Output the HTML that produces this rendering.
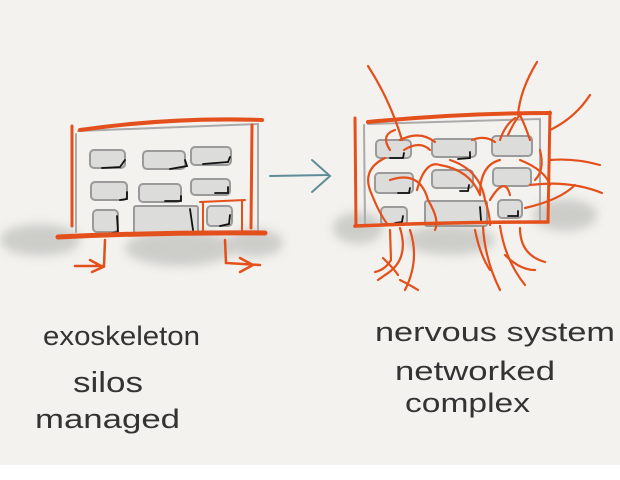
<!DOCTYPE html>
<html><head><meta charset="utf-8"><style>
html,body{margin:0;padding:0;background:#fff}
svg{display:block}
text{font-family:"Liberation Sans",sans-serif;fill:#333;font-weight:normal}
</style></head><body>
<svg width="620" height="480" viewBox="0 0 620 480" xmlns="http://www.w3.org/2000/svg">
<defs>
<filter id="bl" x="-30%" y="-50%" width="160%" height="200%"><feGaussianBlur stdDeviation="5"/></filter>
</defs>
<rect width="620" height="465" fill="#f3f2ee"/>
<g fill="#c9c9c6" filter="url(#bl)" opacity="0.9">
<ellipse cx="40" cy="240" rx="40" ry="16"/>
<ellipse cx="180" cy="248" rx="55" ry="18"/>
<ellipse cx="255" cy="243" rx="28" ry="14"/>
<ellipse cx="358" cy="228" rx="25" ry="16"/>
<ellipse cx="450" cy="240" rx="45" ry="15"/>
<ellipse cx="565" cy="215" rx="32" ry="16"/>
</g>
<g fill="none" stroke-linecap="round">
<path d="M78 131 L258 124 L258 230 M76 134 L76 232" stroke="#aaa" stroke-width="2"/>
<g fill="#dcdcda" stroke="#9a9a9a" stroke-width="2">
<rect x="90" y="150" width="35" height="18" rx="4"/>
<rect x="143" y="151" width="42" height="18" rx="4"/>
<rect x="191" y="147" width="40" height="18" rx="4"/>
<rect x="91" y="182" width="36" height="18" rx="4"/>
<rect x="139" y="184" width="42" height="18" rx="4"/>
<rect x="191" y="179" width="39" height="16" rx="4"/>
<rect x="93" y="210" width="25" height="22" rx="4"/>
<rect x="134" y="206" width="64" height="27" rx="2"/>
<rect x="207" y="206" width="25" height="20" rx="4"/>
</g>
<g stroke="#111" stroke-width="1.8">
<path d="M102 168 L120 167 L125 160"/><path d="M170 169 L187 166 L185 160"/>
<path d="M203 164 L228 162 L230 157"/><path d="M120 200 L127 199 L127 192"/>
<path d="M165 201 L181 201 L181 196"/><path d="M215 193 L228 193 L228 187"/>
<path d="M112 233 L118 232 L117 216"/><path d="M190 209 L193 230"/>
<path d="M220 226 L229 224 L230 215"/>
</g>
<g stroke="#e4501c">
<path d="M80 130 Q170 117 262 120" stroke-width="4"/>
<path d="M72 126 L72 226" stroke-width="3"/>
<path d="M252 125 L251 228" stroke-width="3"/>
<path d="M200 202 L245 200 M203 203 L203 233 M242 201 L242 230" stroke-width="2"/>
<path d="M58 237 Q160 232 265 233" stroke-width="5"/>
<path d="M105 240 L104 266 L75 266 M90 260 L103 267 L92 272" stroke-width="2.5"/>
<path d="M225 240 L226 263 L260 265 M240 258 L253 265 L240 272" stroke-width="2.5"/>
</g>
<path d="M270 176 L328 175 M312 160 L330 176 L312 192" stroke="#5f8c96" stroke-width="2"/>
<path d="M368 124 L540 119 L540 222 M364 125 L365 226" stroke="#aaa" stroke-width="2"/>
<g fill="#dcdcda" stroke="#9a9a9a" stroke-width="2">
<rect x="376" y="140" width="35" height="18" rx="4"/>
<rect x="432" y="139" width="44" height="18" rx="4"/>
<rect x="492" y="136" width="40" height="20" rx="4"/>
<rect x="375" y="173" width="38" height="20" rx="4"/>
<rect x="432" y="170" width="41" height="18" rx="4"/>
<rect x="493" y="168" width="38" height="18" rx="4"/>
<rect x="381" y="207" width="26" height="18" rx="4"/>
<rect x="425" y="201" width="62" height="25" rx="2"/>
<rect x="498" y="200" width="24" height="18" rx="4"/>
</g>
<g stroke="#111" stroke-width="1.8">
<path d="M390 158 L403 158 L404 153"/><path d="M458 159 L470 158 L470 152"/>
<path d="M398 193 L409 193 L410 188"/><path d="M460 191 L468 191 L469 185"/>
<path d="M395 223 L402 222 L403 216"/><path d="M480 207 L481 220"/>
<path d="M508 216 L518 216 L518 211"/>
</g>
<g stroke="#e4501c" stroke-width="2.2">
<path d="M368 122 Q460 113 550 113" stroke-width="4"/>
<path d="M355 118 L356 226" stroke-width="3"/>
<path d="M550 112 L548 222" stroke-width="3"/>
<path d="M355 226 Q450 222 548 222" stroke-width="3.5"/>
<path d="M368 66 Q390 100 402 140"/>
<path d="M537 62 Q520 90 518 115"/>
<path d="M590 95 Q575 118 550 130"/>
<path d="M395 130 Q380 135 390 150"/>
<path d="M400 140 Q420 130 435 142"/>
<path d="M404 150 Q420 140 430 150"/>
<path d="M472 140 Q485 135 495 142"/>
<path d="M508 135 Q515 120 520 115 Q525 125 530 140"/>
<path d="M500 140 Q505 125 515 118"/>
<path d="M385 158 Q360 170 372 195 Q380 215 388 225"/>
<path d="M390 180 Q420 170 428 200 Q440 220 435 230"/>
<path d="M417 190 Q425 160 440 165 Q470 170 480 195"/>
<path d="M450 160 Q480 170 485 200 Q490 215 490 225"/>
<path d="M480 195 Q480 165 500 160"/>
<path d="M490 200 Q505 175 510 195"/>
<path d="M550 160 Q575 158 600 165"/>
<path d="M530 185 Q570 180 602 193"/>
<path d="M525 208 Q560 200 575 185"/>
<path d="M535 180 Q545 170 540 150"/>
<path d="M520 160 Q545 170 550 185"/>
<path d="M390 230 L391 260 Q385 270 375 272"/>
<path d="M383 258 Q395 270 398 275"/>
<path d="M400 228 Q410 260 385 275 L378 280"/>
<path d="M410 230 Q420 260 405 290"/>
<path d="M400 280 Q410 285 418 290"/>
<path d="M483 227 Q485 260 500 290"/>
<path d="M500 226 Q505 260 525 285"/>
<path d="M520 228 Q520 255 545 262"/>
<path d="M475 230 Q480 255 490 270"/>
<path d="M505 255 Q520 270 535 270"/>
</g>
</g>
<text x="43" y="345" font-size="27" textLength="157" lengthAdjust="spacingAndGlyphs">exoskeleton</text>
<text x="73" y="392" font-size="29" textLength="70" lengthAdjust="spacingAndGlyphs">silos</text>
<text x="35" y="428" font-size="27" textLength="145" lengthAdjust="spacingAndGlyphs">managed</text>
<text x="375" y="341" font-size="27" textLength="240" lengthAdjust="spacingAndGlyphs">nervous system</text>
<text x="395" y="380" font-size="27" textLength="160" lengthAdjust="spacingAndGlyphs">networked</text>
<text x="405" y="412" font-size="27" textLength="125" lengthAdjust="spacingAndGlyphs">complex</text>
</svg>
</body></html>
